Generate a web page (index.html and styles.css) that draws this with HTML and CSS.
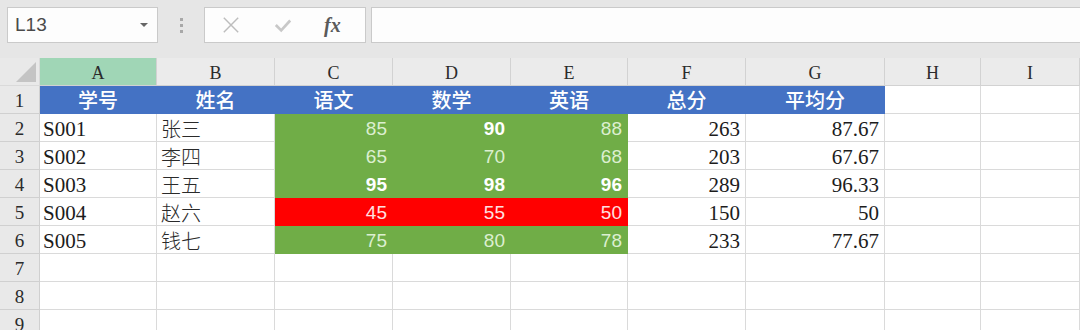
FILE: index.html
```html
<!DOCTYPE html>
<html lang="zh-CN">
<head>
  <meta charset="UTF-8" />
  <title>成绩表</title>
  <link rel="stylesheet" href="styles.css">
</head>
<body>
  <div class="toolbar">
    <div class="namebox">
      <span>L13</span>
      <span class="caret"></span>
    </div>
    <div class="grip"><i></i><i></i><i></i></div>
    <div class="fxbox">
      <svg class="ico" width="20" height="20" viewBox="0 0 20 20">
        <path d="M2 2 L18 18 M18 2 L2 18" stroke="#bdbdbd" stroke-width="1.6" fill="none" />
      </svg>
      <svg class="ico" width="20" height="20" viewBox="0 0 20 20">
        <path d="M2 10 L8 16 L18 5" stroke="#c8c8c8" stroke-width="3" fill="none" />
      </svg>
      <span class="fx">fx</span>
    </div>
    <div class="formula"></div>
  </div>

  <div class="sheet">
    <div class="corner"><span class="tri"></span></div>
    <div class="ch sel">A</div>
    <div class="ch">B</div>
    <div class="ch">C</div>
    <div class="ch">D</div>
    <div class="ch">E</div>
    <div class="ch">F</div>
    <div class="ch">G</div>
    <div class="ch">H</div>
    <div class="ch">I</div>

    <div class="rh">1</div>
    <div class="hd">学号</div>
    <div class="hd">姓名</div>
    <div class="hd">语文</div>
    <div class="hd">数学</div>
    <div class="hd">英语</div>
    <div class="hd">总分</div>
    <div class="hd">平均分</div>
    <div class="c"></div>
    <div class="c"></div>

    <div class="rh">2</div>
    <div class="c t">S001</div>
    <div class="c cn">张三</div>
    <div class="c g">85</div>
    <div class="c g b">90</div>
    <div class="c g">88</div>
    <div class="c n">263</div>
    <div class="c n">87.67</div>
    <div class="c"></div>
    <div class="c"></div>

    <div class="rh">3</div>
    <div class="c t">S002</div>
    <div class="c cn">李四</div>
    <div class="c g">65</div>
    <div class="c g">70</div>
    <div class="c g">68</div>
    <div class="c n">203</div>
    <div class="c n">67.67</div>
    <div class="c"></div>
    <div class="c"></div>

    <div class="rh">4</div>
    <div class="c t">S003</div>
    <div class="c cn">王五</div>
    <div class="c g b">95</div>
    <div class="c g b">98</div>
    <div class="c g b">96</div>
    <div class="c n">289</div>
    <div class="c n">96.33</div>
    <div class="c"></div>
    <div class="c"></div>

    <div class="rh">5</div>
    <div class="c t">S004</div>
    <div class="c cn">赵六</div>
    <div class="c r">45</div>
    <div class="c r">55</div>
    <div class="c r">50</div>
    <div class="c n">150</div>
    <div class="c n">50</div>
    <div class="c"></div>
    <div class="c"></div>

    <div class="rh">6</div>
    <div class="c t">S005</div>
    <div class="c cn">钱七</div>
    <div class="c g">75</div>
    <div class="c g">80</div>
    <div class="c g">78</div>
    <div class="c n">233</div>
    <div class="c n">77.67</div>
    <div class="c"></div>
    <div class="c"></div>

    <div class="rh">7</div>
    <div class="c"></div><div class="c"></div><div class="c"></div><div class="c"></div><div class="c"></div><div class="c"></div><div class="c"></div><div class="c"></div><div class="c"></div>
    <div class="rh">8</div>
    <div class="c"></div><div class="c"></div><div class="c"></div><div class="c"></div><div class="c"></div><div class="c"></div><div class="c"></div><div class="c"></div><div class="c"></div>
    <div class="rh">9</div>
    <div class="c"></div><div class="c"></div><div class="c"></div><div class="c"></div><div class="c"></div><div class="c"></div><div class="c"></div><div class="c"></div><div class="c"></div>
  </div>
</body>
</html>
```

FILE: styles.css
```css
body {
  margin: 0;
  background: #e6e6e6;
  width: 1080px;
  height: 330px;
  overflow: hidden;
  font-family: 'Liberation Serif', 'Noto Sans CJK SC', serif;
}

/* name box + formula bar */
.toolbar {
  display: flex;
  align-items: center;
  padding: 7px 0 0 7px;
  height: 36px;
  margin-bottom: 15px;
}
.namebox {
  width: 151px;
  height: 36px;
  box-sizing: border-box;
  background: #fdfdfd;
  border: 1px solid #cacaca;
  display: flex;
  align-items: center;
  justify-content: space-between;
  padding: 0 9px 0 7px;
  font-family: 'Liberation Sans', sans-serif;
  font-size: 19px;
  color: #4a4a4a;
}
.caret {
  width: 0;
  height: 0;
  border-left: 4px solid transparent;
  border-right: 4px solid transparent;
  border-top: 4px solid #666;
}
.grip {
  width: 46px;
  display: flex;
  flex-direction: column;
  align-items: center;
  gap: 3px;
}
.grip i {
  width: 3px;
  height: 3px;
  background: #a8a8a8;
}
.fxbox {
  width: 162px;
  height: 36px;
  box-sizing: border-box;
  background: #fdfdfd;
  border: 1px solid #cacaca;
  display: flex;
  align-items: center;
  padding-left: 17px;
  gap: 34px;
}
.ico {
  width: 18px;
  height: 18px;
}
.fx {
  font-family: 'Liberation Serif', serif;
  font-style: italic;
  font-weight: bold;
  font-size: 20px;
  color: #5a5a5a;
  margin-left: -2px;
}
.formula {
  flex: 1;
  margin-left: 5px;
  height: 36px;
  box-sizing: border-box;
  background: #fdfdfd;
  border: 1px solid #cacaca;
  border-right: none;
}

/* worksheet */
.sheet {
  display: grid;
  grid-template-columns: 40px 117px 118px 118px 118px 117px 118px 139px 96px 99px;
  grid-auto-rows: 28px;
  background: #fff;
}
.sheet > div {
  box-sizing: border-box;
  border-right: 1px solid #dadada;
  border-bottom: 1px solid #dadada;
  display: flex;
  align-items: center;
  white-space: nowrap;
}
.corner {
  background: #e9e9e9;
  position: relative;
}
.tri {
  position: absolute;
  right: 3px;
  bottom: 3px;
  width: 0;
  height: 0;
  border-left: 20px solid transparent;
  border-bottom: 20px solid #c4c4c4;
}
.ch {
  background: #ebebeb;
  justify-content: center;
  font-size: 18px;
  color: #2b2b2b;
  padding-top: 3px;
  border-color: #d2d2d2 !important;
}
.ch.sel {
  background: #a0d6b6;
}
.rh {
  background: #e9e9e9;
  justify-content: center;
  font-size: 19px;
  color: #2b2b2b;
  padding-top: 2px;
  border-color: #d0d0d0 !important;
}
.hd {
  background: #4472c4;
  border-color: #4472c4 !important;
  justify-content: center;
  font-family: 'Noto Sans CJK SC', sans-serif;
  font-size: 20px;
  font-weight: 500;
  color: #fff;
}
.c {
  font-family: 'Liberation Serif', serif;
  font-size: 21px;
  color: #1c1c1c;
  padding-top: 3px;
}
.t {
  padding-left: 3px;
}
.cn {
  padding-left: 4px;
  font-family: 'Noto Sans CJK SC', sans-serif;
  font-weight: 300;
  font-size: 20px;
  color: #2a2a2a;
  padding-top: 1px;
}
.n {
  justify-content: flex-end;
  padding-right: 5px;
}
.g, .r {
  justify-content: flex-end;
  padding-right: 5px;
  font-family: 'Liberation Sans', sans-serif;
  font-size: 19px;
}
.g {
  background: #70ad47;
  border-color: #70ad47 !important;
  color: #dcefd0;
}
.r {
  background: #ff0000;
  border-color: #ff0000 !important;
  color: #ffe0e0;
}
.b {
  font-weight: bold;
  color: #fff;
}
```
